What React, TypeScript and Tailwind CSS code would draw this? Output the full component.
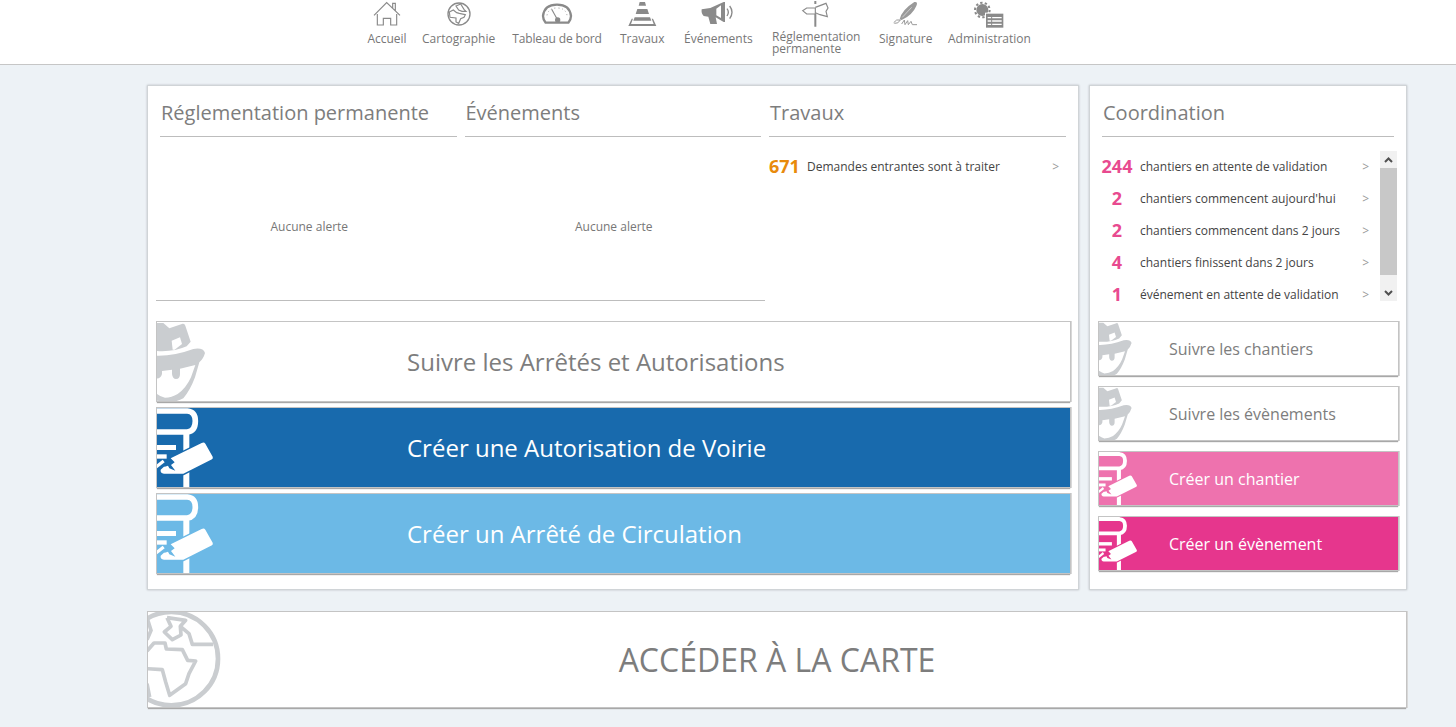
import React from "react";

const G = "#cacdd0";

function Hat({ h }: { h: number }) {
  return (
    <svg viewBox="21 9 165 243" height={h} width={(h * 165) / 243} className="absolute left-0 top-0">
      <path fill={G} d="M18 12 H40 L58 28 L98 14 Q104 13 106 20 L122 68 L110 82 Q70 100 18 96 Z" />
      <path fill="#fff" d="M65 65 L90 55 L96 75 L74 92 L68 92 Z" />
      <path fill={G} d="M18 110 Q70 112 130 90 Q160 85 165 102 Q160 120 148 130 L135 175 Q120 215 100 238 Q80 250 50 248 L18 245 Z" />
      <path fill="#fff" d="M18 222 V178 Q32 180 36 165 V156 L66 152 V165 Q68 180 78 180 Q90 180 90 165 V149 L136 138 L123 175 Q108 208 83 225 Q65 236 45 236 Q28 232 18 222 Z" />
    </svg>
  );
}

function Pen({ h, bg }: { h: number; bg: string }) {
  const pencil = "M62 160 L155 114 Q162 110 166 116 L188 155 Q190 160 186 163 L100 206 H42 Q30 204 32 194 L50 178 Z";
  return (
    <svg viewBox="21 9 175 243" height={h} width={(h * 175) / 243} className="absolute left-0 top-0">
      <path fill="none" stroke="#fff" strokeWidth="17" d="M18 18 H112 Q136 20 136 48 Q136 78 112 81 H18" />
      <rect x="100" y="85" width="18" height="170" fill="#fff" />
      <rect x="18" y="120" width="60" height="15" fill="#fff" />
      <rect x="18" y="148" width="32" height="13" fill="#fff" />
      <path d="M18 180 L38 164 L44 172 L18 192 Z" fill="#fff" />
      <path d={pencil} fill={bg} stroke={bg} strokeWidth="9" />
      <path d={pencil} fill="#fff" />
      <path fill={bg} d="M56 154 L74 172 L63 180 L76 197 L58 190 L54 182 L42 186 L50 172 Z" />
    </svg>
  );
}

function Globe() {
  return (
    <svg viewBox="27 35 300 300" width="100" height="100" className="absolute left-0 top-0" fill="none" stroke={G}>
      <circle cx="97" cy="175" r="140" strokeWidth="14" />
      <path strokeWidth="11" strokeLinejoin="round" d="M84 52 L140 60 L124 78 L150 100 L160 132 H222 M84 52 L96 78 L76 95 L100 118 L126 104 L124 78" />
      <path strokeWidth="11" strokeLinejoin="round" d="M24 152 L45 128 H78 L82 146 L130 148 L146 180 L170 182 L150 220 L140 250 L92 285 L80 245 L70 208 L24 205" />
      <path strokeWidth="11" d="M24 250 L32 290 M24 52 L36 90 L24 118" />
    </svg>
  );
}

const navIcon = "h-[28px] w-auto";
const navIcons: Record<string, React.ReactNode> = {
  home: (
    <svg viewBox="36 0 90 84" className={navIcon} fill="none" stroke="#8a8a8a" strokeWidth="3.5">
      <path d="M42 46 L80 8 L120 46 M98 24 V10 H106 V32 M52 42 V75 H70 V55 H92 V75 H110 V42" />
    </svg>
  ),
  globe: (
    <svg viewBox="255 0 84 84" className={navIcon} fill="none" stroke="#8a8a8a" strokeWidth="4">
      <circle cx="297" cy="42" r="33" />
      <path d="M268 36 L280 30 L290 38 L298 40 L316 44 L312 52 L302 56 L296 70 L288 66 L288 54 L270 52 Z M288 18 L302 12 L312 28 L318 34 L306 34 L296 30 Z" strokeWidth="3.5" />
    </svg>
  ),
  gauge: (
    <svg viewBox="540 0 96 84" className={navIcon} fill="none">
      <path stroke="#8a8a8a" strokeWidth="7" fill="none" d="M554 68 Q546 58 546 48 Q550 14 588 14 Q626 14 630 48 Q630 58 622 68 Z" />
      <path stroke="#8a8a8a" strokeWidth="3.5" d="M572 28 L590 60" />
      <circle cx="590" cy="60" r="8" fill="#8a8a8a" />
      <path stroke="#a0a0a0" strokeWidth="3" strokeDasharray="3 8" d="M558 46 Q562 24 588 24 Q614 24 618 46" />
    </svg>
  ),
  cone: (
    <svg viewBox="800 0 90 84" className={navIcon} fill="#8a8a8a">
      <path d="M838 6 H854 L857 17 H835 Z" />
      <path d="M831 27 H861 L866 42 H826 Z" />
      <path d="M823 52 H869 L873 62 H819 Z" />
      <path d="M814 56 H818 L812 72 H880 L874 56 H878 L888 78 H804 Z" />
    </svg>
  ),
  horn: (
    <svg viewBox="34 0 100 84" className={navIcon} fill="#8a8a8a">
      <path d="M36 28 L62 24 L102 6 H106 V66 H102 L78 52 L82 72 L62 72 L56 50 L42 48 Q34 40 36 28 Z" />
      <path d="M94 16 V54 L80 46 V26 Z" fill="#fff" />
      <path fill="none" stroke="#8a8a8a" strokeWidth="4" d="M112 26 Q120 36 112 48 M120 18 Q134 36 120 56" />
    </svg>
  ),
  sign: (
    <svg viewBox="335 0 90 84" className={navIcon} fill="none" stroke="#8a8a8a" strokeWidth="3.5">
      <path d="M378 42 V80 M378 3 V12" strokeWidth="6" />
      <path d="M340 32 L352 24 H378 V42 H352 Z" />
      <path d="M378 22 L410 10 L416 24 L410 34 L414 50 L392 44 L378 38" />
    </svg>
  ),
  pen: (
    <svg viewBox="608 0 84 84" className={navIcon} fill="#9a9a9a">
      <path d="M634 58 Q640 30 678 6 Q690 4 684 18 Q672 46 640 60 Z" />
      <path fill="none" stroke="#fff" strokeWidth="1.5" d="M642 52 L670 22" />
      <path fill="none" stroke="#9a9a9a" strokeWidth="3" d="M616 68 Q624 56 636 60 Q630 72 618 70 M640 72 L648 60 L650 74 L658 62 L660 74 L668 64 L672 74 H686" />
    </svg>
  ),
  admin: (
    <svg viewBox="852 0 96 84" className={navIcon}>
      <circle cx="880" cy="30" r="14" fill="#8a8a8a" stroke="#8a8a8a" strokeWidth="8" />
      <circle cx="880" cy="30" r="22" fill="none" stroke="#8a8a8a" strokeWidth="6" strokeDasharray="7 6.8" />
      <rect x="888" y="38" width="56" height="46" fill="#fff" />
      <rect x="891" y="41" width="52" height="42" fill="#8a8a8a" />
      <path stroke="#fff" strokeWidth="4" d="M896 53 H938 M896 63 H938 M896 73 H938" fill="none" />
      <path stroke="#8a8a8a" strokeWidth="3" d="M908 48 V80" fill="none" />
    </svg>
  ),
};

const navItems = [
  { k: "home", l: "Accueil", w: "w-[40px]", m: "ml-0" },
  { k: "globe", l: "Cartographie", w: "w-[73px]", m: "ml-[15px]" },
  { k: "gauge", l: "Tableau de bord", w: "w-[90px] tracking-[-0.13px]", m: "ml-[17px]" },
  { k: "cone", l: "Travaux", w: "w-[44px]", m: "ml-[18px]" },
  { k: "horn", l: "Événements", w: "w-[68px]", m: "ml-[20px]" },
  { k: "sign", l: "Réglementation permanente", w: "w-[88px]", m: "ml-[20px]" },
  { k: "pen", l: "Signature", w: "w-[52px]", m: "ml-[19px]" },
  { k: "admin", l: "Administration", w: "w-[82px]", m: "ml-[17px]" },
];

function Heading({ children }: { children: React.ReactNode }) {
  return (
    <div className="mx-1 h-[51px] border-b border-[#bdbdbd] pl-[1px] pt-[12px] text-[20px] leading-[30px] text-[#7d7d7d]">
      {children}
    </div>
  );
}

const btnBase = "relative flex items-center overflow-hidden border border-[#c4c4c4] shadow-[0_2px_1px_-1px_#a8a8a8,1px_0_0_#d8d8d8]";

function BigBtn({ label, kind, bg }: { label: string; kind: "hat" | "pen"; bg: string }) {
  const cls =
    kind === "hat"
      ? "bg-white text-[#7d7d7d]"
      : bg === "#186aad"
        ? "bg-[#186aad] text-white"
        : "bg-[#6cb9e6] text-white";
  return (
    <div className={`${btnBase} h-[81px] pl-[250px] text-[24px] ${cls}`}>
      {kind === "hat" ? <Hat h={81} /> : <Pen h={81} bg={bg} />}
      {label}
    </div>
  );
}

function SmallBtn({ label, kind, bg }: { label: string; kind: "hat" | "pen"; bg: string }) {
  const cls =
    kind === "hat"
      ? "bg-white text-[#7d7d7d]"
      : bg === "#ee72ae"
        ? "bg-[#ee72ae] text-white"
        : "bg-[#e6368d] text-white";
  return (
    <div className={`${btnBase} h-[55px] pl-[70px] text-[16px] ${cls}`}>
      {kind === "hat" ? <Hat h={55} /> : <Pen h={55} bg={bg} />}
      {label}
    </div>
  );
}

const rows = [
  ["244", "chantiers en attente de validation"],
  ["2", "chantiers commencent aujourd'hui"],
  ["2", "chantiers commencent dans 2 jours"],
  ["4", "chantiers finissent dans 2 jours"],
  ["1", "événement en attente de validation"],
];

export default function App() {
  return (
    <div className="h-[727px] overflow-hidden bg-[#edf2f6] font-['Open_Sans',sans-serif]">
      <header className="flex h-[65px] border-b border-[#c6c6c6] bg-white pl-[367px] text-[12px] text-[#777]">
        {navItems.map((n) => (
          <div key={n.k} className={`flex flex-col items-center ${n.w} ${n.m}`}>
            <div className="flex h-[30px] items-start">{navIcons[n.k]}</div>
            {n.k === "sign" ? (
              <div className="w-full pt-[1px] text-left leading-[12px]">
                Réglementation
                <br />
                permanente
              </div>
            ) : (
              <div className="w-full whitespace-nowrap pt-[1px] text-center leading-[16px]">{n.l}</div>
            )}
          </div>
        ))}
      </header>

      <main className="ml-[147px] w-[1260px] pt-[20px]">
        <div className="flex gap-[10px]">
          <section className="h-[505px] w-[932px] border border-[#d0d4d7] bg-white pl-[8px] shadow-[0_0_2px_#b8bcc0]">
            <div className="flex h-[215px]">
              <div className="flex w-[609px] border-b border-[#bdbdbd]">
                {["Réglementation permanente", "Événements"].map((t) => (
                  <div key={t} className="w-[304.5px]">
                    <Heading>{t}</Heading>
                    <div className="flex h-[163px] items-center justify-center pl-[2px] pt-[16px] text-[12px] text-[#777]">Aucune alerte</div>
                  </div>
                ))}
              </div>
              <div className="w-[305px]">
                <Heading>Travaux</Heading>
                <div className="mt-[14px] flex h-[32px] items-center pl-[4px] pr-[11px] text-[12px] text-[#444]">
                  <span className="w-[38px] pb-[1px] text-[18px] font-bold text-[#e88a0c]">671</span>
                  <span className="flex-1">Demandes entrantes sont à traiter</span>
                  <span className="text-[#999]">&gt;</span>
                </div>
              </div>
            </div>
            <div className="mt-[20px] flex w-[915px] flex-col gap-[5px]">
              <BigBtn label="Suivre les Arrêtés et Autorisations" kind="hat" bg="#fff" />
              <BigBtn label="Créer une Autorisation de Voirie" kind="pen" bg="#186aad" />
              <BigBtn label="Créer un Arrêté de Circulation" kind="pen" bg="#6cb9e6" />
            </div>
          </section>

          <section className="h-[505px] w-[318px] border border-[#d0d4d7] bg-white pl-[8px] shadow-[0_0_2px_#b8bcc0]">
            <div className="w-[304px] pr-[4px]">
              <Heading>Coordination</Heading>
            </div>
            <div className="mt-[14px] flex h-[150px] w-[299px]">
              <div className="h-[150px] w-[282px]">
                {rows.map(([n, t]) => (
                  <div key={t} className="flex h-[32px] items-center text-[12px] text-[#444]">
                    <span className="w-[38px] pb-[2px] text-center text-[18px] font-bold text-[#e84a8f]">{n}</span>
                    <span className="ml-[4px] flex-1 whitespace-nowrap">{t}</span>
                    <span className="mr-[11px] text-[#999]">&gt;</span>
                  </div>
                ))}
              </div>
              <div className="flex w-[17px] flex-col bg-[#f1f1f1]">
                <div className="flex h-[17px] items-center justify-center">
                  <svg width="9" height="6" viewBox="0 0 9 6" fill="none" stroke="#505050" strokeWidth="2"><path d="M1 5 L4.5 1.5 L8 5" /></svg>
                </div>
                <div className="h-[107px] bg-[#c8c8c8]" />
                <div className="flex-1" />
                <div className="flex h-[17px] items-center justify-center">
                  <svg width="9" height="6" viewBox="0 0 9 6" fill="none" stroke="#505050" strokeWidth="2"><path d="M1 1 L4.5 4.5 L8 1" /></svg>
                </div>
              </div>
            </div>
            <div className="mt-[20px] flex w-[301px] flex-col gap-[10px]">
              <SmallBtn label="Suivre les chantiers" kind="hat" bg="#fff" />
              <SmallBtn label="Suivre les évènements" kind="hat" bg="#fff" />
              <SmallBtn label="Créer un chantier" kind="pen" bg="#ee72ae" />
              <SmallBtn label="Créer un évènement" kind="pen" bg="#e6368d" />
            </div>
          </section>
        </div>

        <div className={`${btnBase} mt-[21px] h-[97px] justify-center bg-white text-[32px] text-[#7d7d7d]`}>
          <Globe />
          ACCÉDER À LA CARTE
        </div>
      </main>
    </div>
  );
}
